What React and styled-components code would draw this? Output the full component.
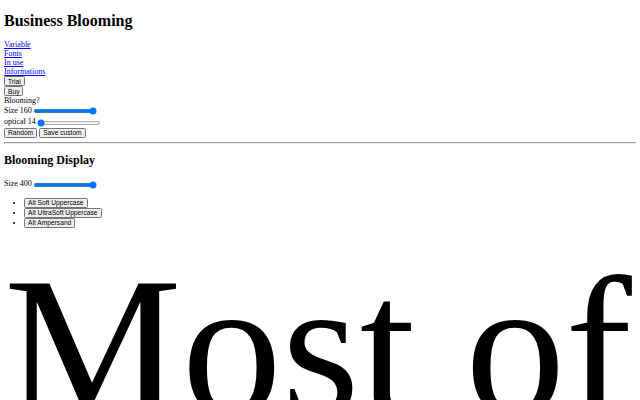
import React, { useState } from 'react';
import styled, { createGlobalStyle } from 'styled-components';

const GlobalStyle = createGlobalStyle`
  html {
    zoom: 0.5;
  }
  body {
    margin: 8px;
    font-family: 'Liberation Serif', 'Times New Roman', serif;
    font-size: 16px;
    color: #000;
    background: #fff;
    overflow: hidden;
  }
`;

const Title = styled.h1`
  font-size: 32px;
  font-weight: bold;
  margin: 15px 0 21.44px;
`;

const Nav = styled.nav`
  display: flex;
  flex-direction: column;
  align-items: flex-start;
`;

const NavLink = styled.a`
  color: #0000ee;
  text-decoration: underline;
`;

const Block = styled.div``;

const Button = styled.button`
  font-family: 'Liberation Sans', Arial, sans-serif;
  font-size: 13.33px;
`;

const SliderRow = styled.div`
  line-height: 22px;
`;

const Range = styled.input.attrs({ type: 'range' })`
  margin: 2px;
  vertical-align: middle;
`;

const Rule = styled.hr`
  margin: 8px 0;
`;

const SubTitle = styled.h2`
  font-size: 24px;
  font-weight: bold;
  margin: 19.92px 0;
`;

const AltList = styled.ul`
  margin: 16px 0;
  padding-left: 40px;
`;

const Specimen = styled.div`
  font-size: ${(p) => p.size}px;
  margin-top: -8px;
  white-space: normal;
`;

function Slider({ label, min, max, value, onChange }) {
  return (
    <SliderRow>
      {label} {value}
      <Range min={min} max={max} value={value} onChange={(e) => onChange(Number(e.target.value))} />
    </SliderRow>
  );
}

export default function App() {
  const [size, setSize] = useState(160);
  const [optical, setOptical] = useState(14);
  const [displaySize, setDisplaySize] = useState(400);

  return (
    <>
      <GlobalStyle />
      <Title>Business Blooming</Title>
      <Nav>
        <NavLink href="#variable">Variable</NavLink>
        <NavLink href="#fonts">Fonts</NavLink>
        <NavLink href="#in-use">In use</NavLink>
        <NavLink href="#informations">Informations</NavLink>
      </Nav>
      <Block><Button>Trial</Button></Block>
      <Block><Button>Buy</Button></Block>
      <Block>Blooming?</Block>
      <Slider label="Size" min={10} max={160} value={size} onChange={setSize} />
      <Slider label="optical" min={14} max={144} value={optical} onChange={setOptical} />
      <Block>
        <Button>Random</Button> <Button>Save custom</Button>
      </Block>
      <Rule />
      <SubTitle>Blooming Display</SubTitle>
      <Slider label="Size" min={10} max={400} value={displaySize} onChange={setDisplaySize} />
      <AltList>
        <li><Button>Alt Soft Uppercase</Button></li>
        <li><Button>Alt UltraSoft Uppercase</Button></li>
        <li><Button>Alt Ampersand</Button></li>
      </AltList>
      <Specimen size={displaySize}>Most of the time, business is blooming.</Specimen>
    </>
  );
}
